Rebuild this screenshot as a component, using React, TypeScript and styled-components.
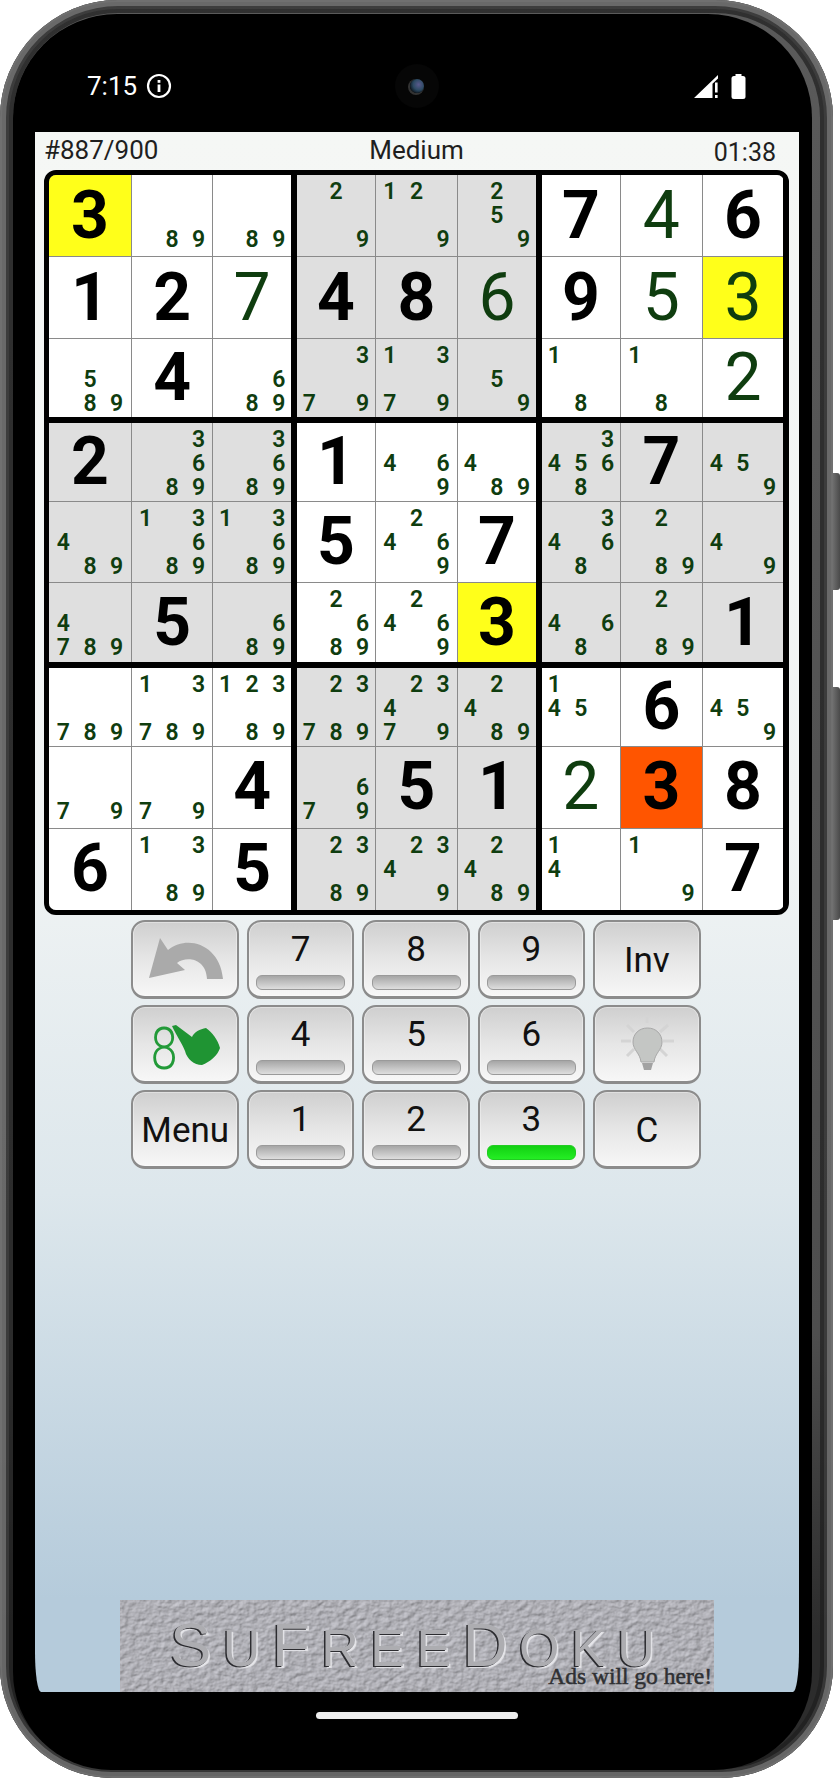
import React from 'react';
import styled, { createGlobalStyle } from 'styled-components';

const GlobalStyle = createGlobalStyle`
  html, body {
    margin: 0;
    padding: 0;
    background: #ffffff;
  }
  * {
    box-sizing: border-box;
  }
`;

const Page = styled.div`
  width: 840px;
  height: 1778px;
  background: #ffffff;
  overflow: hidden;
  font-family: Roboto, "Liberation Sans", sans-serif;
`;

const Shell = styled.div`
  position: relative;
  width: 833px;
  height: 1778px;
  padding: 14px 21px 8px 13px;
  border-radius: 118px 118px 112px 112px;
  background: linear-gradient(180deg, #5a5a5a 0%, #4e4e4e 75%, #2c2c2c 92%);
  box-shadow:
    inset 0 0 0 2px rgba(120, 120, 120, 0.5),
    inset 0 0 0 6px rgba(150, 150, 150, 0.5),
    inset 0 0 0 9px rgba(70, 70, 70, 0.6),
    inset 0 0 0 13px rgba(30, 30, 30, 0.7);
`;

const SideKey = styled.div<{ $top: number; $height: number }>`
  position: absolute;
  left: 833px;
  top: ${(p) => p.$top}px;
  width: 7px;
  height: ${(p) => p.$height}px;
  border-radius: 0 3px 3px 0;
  background: linear-gradient(90deg, #6d6d6d, #4a4a4a);
`;

const Bezel = styled.div`
  height: 100%;
  padding: 0 13px 0 22px;
  border-radius: 104px 104px 98px 98px;
  background: #000000;
  display: flex;
  flex-direction: column;
`;

const StatusBar = styled.div`
  position: relative;
  height: 118px;
  flex-shrink: 0;
  padding: 26px 53px 0 52px;
  display: flex;
  align-items: center;
  justify-content: space-between;
  color: #ffffff;
`;

const StatusGroup = styled.div<{ $gap: number }>`
  display: flex;
  align-items: center;
  gap: ${(p) => p.$gap}px;
`;

const Clock = styled.span`
  font-size: 26px;
  line-height: 1;
`;

const Camera = styled.div`
  position: absolute;
  left: 50%;
  top: 50px;
  width: 44px;
  height: 44px;
  margin-left: -22px;
  border-radius: 50%;
  background: #060606;
  display: flex;
  align-items: center;
  justify-content: center;
`;

const Lens = styled.div`
  width: 14px;
  height: 14px;
  border-radius: 50%;
  background: radial-gradient(circle at 62% 40%, #5a5a8c 0, #2c4a63 45%, #0a1016 80%);
  box-shadow: -1px 1px 0 1px #333333;
`;

const Screen = styled.div`
  height: 1560px;
  flex-shrink: 0;
  border-radius: 0 0 6px 6px / 0 0 40px 40px;
  background: linear-gradient(180deg, #f5f7f5 0%, #f1f4f4 45%, #dde7ec 68%, #b5cbdb 94%);
  display: flex;
  flex-direction: column;
  overflow: hidden;
`;

const GameHeader = styled.div`
  height: 38px;
  flex-shrink: 0;
  padding: 0 23px 2px 9px;
  display: grid;
  grid-template-columns: 1fr auto 1fr;
  align-items: center;
  font-size: 26px;
  line-height: 1;
  color: #1f1f1f;
`;

const HeaderCenter = styled.span`
  padding-left: 13px;
`;

const HeaderRight = styled.span`
  text-align: right;
  font-size: 25px;
  padding-top: 4px;
`;

const Board = styled.div`
  width: 745px;
  margin-left: 9px;
  flex-shrink: 0;
  border: 5.5px solid #000000;
  border-bottom-width: 5px;
  border-radius: 12px;
  background: #000000;
  overflow: hidden;
  display: grid;
  grid-template-columns: 242.2px 239.4px 241.3px;
  grid-template-rows: 242px 239.5px 242.5px;
  gap: 5.6px;
`;

const Box = styled.div<{ $cols: string; $rows: string }>`
  display: grid;
  grid-template-columns: ${(p) => p.$cols};
  grid-template-rows: ${(p) => p.$rows};
  gap: 1px;
  background: #8a8a8a;
`;

const Cell = styled.div<{ $bg: string }>`
  background: ${(p) => p.$bg};
  display: flex;
  align-items: center;
  justify-content: center;
  overflow: hidden;
`;

const BigDigit = styled.span<{ $given: boolean }>`
  font-size: 66px;
  line-height: 1;
  font-weight: ${(p) => (p.$given ? 700 : 400)};
  color: ${(p) => (p.$given ? '#000000' : '#0f3d0f')};
`;

const PencilGrid = styled.div`
  width: 100%;
  height: 100%;
  padding: 5px 0 3px;
  display: grid;
  grid-template-columns: repeat(3, 26.6px);
  grid-template-rows: repeat(3, 24px);
  justify-content: center;
`;

const PencilDigit = styled.span`
  font-size: 23px;
  line-height: 24px;
  font-weight: 600;
  text-align: center;
  color: #0f3d0f;
`;

const Keypad = styled.div`
  margin-top: 5px;
  padding-right: 2px;
  flex-shrink: 0;
  display: grid;
  grid-template-columns: repeat(5, 107.6px);
  grid-template-rows: repeat(3, 79px);
  column-gap: 7.8px;
  row-gap: 6px;
  justify-content: center;
`;

const Key = styled.button`
  padding: 3px 0 0;
  border: 2px solid #8c8c8c;
  border-bottom-width: 3px;
  border-radius: 14px;
  background: linear-gradient(180deg, #cfcfcf 0%, #e6e6e6 50%, #f7f7f7 100%);
  box-shadow: inset 0 0 0 1px rgba(255, 255, 255, 0.35);
  font-family: Roboto, "Liberation Sans", sans-serif;
  font-size: 35px;
  line-height: 1;
  color: #111111;
  display: flex;
  align-items: center;
  justify-content: center;
`;

const IconKey = styled(Key)`
  padding: 0;
`;

const DigitKey = styled(Key)`
  padding-top: 10px;
  flex-direction: column;
  justify-content: flex-start;
  gap: 8px;
`;

const CountBar = styled.div<{ $active?: boolean }>`
  width: 89px;
  height: 15px;
  border-radius: 6px;
  border: 1px solid ${(p) => (p.$active ? '#22cc22' : '#9a9a9a')};
  background: ${(p) =>
    p.$active
      ? 'linear-gradient(180deg, #12d012, #24ee24)'
      : 'linear-gradient(180deg, #a6a6a6, #dedede)'};
`;

const KeyIcon = styled.svg`
  overflow: visible;
`;

const AdBanner = styled.div`
  position: relative;
  width: 594px;
  height: 92px;
  margin: auto auto 0;
  flex-shrink: 0;
  background: #a8a8ad;
  overflow: hidden;
`;

const StoneTexture = styled.svg`
  position: absolute;
  left: 0;
  top: 0;
  width: 100%;
  height: 100%;
`;

const AdContent = styled.div`
  position: relative;
  height: 100%;
  padding: 25px 2px 0 50px;
  display: flex;
  flex-direction: column;
`;

const Logo = styled.div`
  display: flex;
  align-items: baseline;
  height: 40px;
  gap: 11.5px;
  line-height: 40px;
  font-family: "Liberation Sans", Arial, sans-serif;
  color: #adadb1;
  text-shadow:
    -1.5px 1px 0 #2c2c30,
    1.5px 2px 1px #e6e6ea;
`;

const LogoLetter = styled.span<{ $big?: boolean }>`
  font-size: ${(p) => (p.$big ? 62 : 52)}px;
  text-transform: uppercase;
`;

const AdNote = styled.div`
  align-self: flex-end;
  font-family: "Liberation Serif", "Times New Roman", serif;
  font-size: 23.5px;
  line-height: 22px;
  color: #2f3033;
  -webkit-text-stroke: 0.5px #2f3033;
`;

const HomeArea = styled.div`
  flex: 1;
  display: flex;
  justify-content: center;
  padding-top: 20px;
`;

const HomeBar = styled.div`
  width: 202px;
  height: 7px;
  border-radius: 4px;
  background: #eeeeee;
`;

const BOARD: string[][] = [
  ['G3y', '89', '89', '29', '129', '259', 'G7', 'P4', 'G6'],
  ['G1', 'G2', 'P7', 'G4', 'G8', 'P6', 'G9', 'P5', 'P3y'],
  ['589', 'G4', '689', '379', '1379', '59', '18', '18', 'P2'],
  ['G2', '3689', '3689', 'G1', '469', '489', '34568', 'G7', '459'],
  ['489', '13689', '13689', 'G5', '2469', 'G7', '3468', '289', '49'],
  ['4789', 'G5', '689', '2689', '2469', 'G3y', '468', '289', 'G1'],
  ['789', '13789', '12389', '23789', '23479', '2489', '145', 'G6', '459'],
  ['79', '79', 'G4', '679', 'G5', 'G1', 'P2', 'G3o', 'G8'],
  ['G6', '1389', 'G5', '2389', '2349', '2489', '14', '19', 'G7'],
];

const HIGHLIGHTS: Record<string, string> = { y: '#ffff1a', o: '#ff5500' };

// the board in the shot is not quite even, track sizes per box column / row
const BOX_COLS = ['82fr 80fr 78fr', '78.5fr 80.5fr 78.5fr', '78fr 80.5fr 80fr'];
const BOX_ROWS = ['81fr 81fr 78fr', '78fr 80.5fr 79fr', '78fr 81fr 81.5fr'];

const cellAt = (box: number, index: number): string => {
  const row = 3 * Math.floor(box / 3) + Math.floor(index / 3);
  const col = 3 * (box % 3) + (index % 3);
  return BOARD[row][col];
};

const SudokuCell = ({ token, shaded }: { token: string; shaded: boolean }): React.ReactElement => {
  const isBig = token[0] === 'G' || token[0] === 'P';
  const highlight = HIGHLIGHTS[token[2]];
  const bg = highlight || (shaded ? '#dfdfdf' : '#ffffff');

  if (isBig) {
    return (
      <Cell $bg={bg}>
        <BigDigit $given={token[0] === 'G'}>{token[1]}</BigDigit>
      </Cell>
    );
  }
  return (
    <Cell $bg={bg}>
      <PencilGrid>
        {[1, 2, 3, 4, 5, 6, 7, 8, 9].map((n) => (
          <PencilDigit key={n}>{token.includes(String(n)) ? n : ''}</PencilDigit>
        ))}
      </PencilGrid>
    </Cell>
  );
};

const InfoIcon = () => (
  <svg width="26" height="26" viewBox="0 0 26 26">
    <circle cx="13" cy="13" r="11" fill="none" stroke="#ffffff" strokeWidth="2.2" />
    <rect x="11.6" y="11.5" width="2.8" height="7.5" fill="#ffffff" />
    <rect x="11.6" y="7" width="2.8" height="2.8" fill="#ffffff" />
  </svg>
);

const SignalIcon = () => (
  <svg width="24" height="23" viewBox="0 0 24 23">
    <path d="M0 23 L24 0 L24 3.5 L18.5 8.8 L18.5 23 Z" fill="#ffffff" />
    <rect x="21" y="7.5" width="2.6" height="10" fill="#ffffff" />
    <rect x="21" y="20" width="2.6" height="3" fill="#ffffff" />
  </svg>
);

const BatteryIcon = () => (
  <svg width="15" height="25" viewBox="0 0 15 25">
    <rect x="4.5" y="0" width="6" height="3" fill="#ffffff" />
    <rect x="0.5" y="2" width="14" height="23" rx="2.5" fill="#ffffff" />
  </svg>
);

const UndoIcon = () => (
  <KeyIcon width="103" height="74" viewBox="2 2 103 74">
    <path
      d="M28 18 L17 58 L53 50 L45 43 C54 36 74 38 75 59 L91 59 C88 25 56 14 36 30 Z"
      fill="#aaaaaa"
    />
  </KeyIcon>
);

const FingerIcon = () => (
  <KeyIcon width="103" height="74" viewBox="2 2 103 74">
    <text
      transform="translate(32 64) scale(0.8 1)"
      textAnchor="middle"
      fontFamily="Roboto, sans-serif"
      fontSize="60"
      fontWeight="300"
      fill="#229a38"
    >
      8
    </text>
    <path
      d="M40 21 L44 20 L60 32 C62 27 68 24 74 23 C80 27 86 35 88 43 C86 50 78 57 70 60 C62 60 55 54 53 46 C50 38 44 30 40 21 Z"
      fill="#1f9433"
    />
  </KeyIcon>
);

const BulbIcon = () => (
  <KeyIcon width="103" height="74" viewBox="2 2 103 74">
    <g stroke="#d4d4d4" strokeWidth="3">
      <line x1="54" y1="12" x2="54" y2="18" />
      <line x1="28" y1="36" x2="38" y2="36" />
      <line x1="70" y1="36" x2="81" y2="36" />
      <line x1="34" y1="20" x2="41" y2="27" />
      <line x1="75" y1="20" x2="67" y2="27" />
      <line x1="34" y1="51" x2="41" y2="44" />
      <line x1="74" y1="51" x2="67" y2="44" />
    </g>
    <path
      d="M54.5 23 C46 23 40 29 40 37 C40 45 47 48 48 57 L61 57 C62 48 69 45 69 37 C69 29 63 23 54.5 23 Z"
      fill="#c4c6c4"
      stroke="#a8a8a8"
      strokeWidth="1"
    />
    <path d="M49 58 L60 58 L58 65 L51 65 Z" fill="#a2a2a2" />
  </KeyIcon>
);

const Keys = () => (
  <Keypad>
    <IconKey aria-label="Undo"><UndoIcon /></IconKey>
    {[7, 8, 9].map((n) => (
      <DigitKey key={n}>{n}<CountBar /></DigitKey>
    ))}
    <Key>Inv</Key>
    <IconKey aria-label="Pencil mode"><FingerIcon /></IconKey>
    {[4, 5, 6].map((n) => (
      <DigitKey key={n}>{n}<CountBar /></DigitKey>
    ))}
    <IconKey aria-label="Hint"><BulbIcon /></IconKey>
    <Key>Menu</Key>
    {[1, 2, 3].map((n) => (
      <DigitKey key={n}>{n}<CountBar $active={n === 3} /></DigitKey>
    ))}
    <Key>C</Key>
  </Keypad>
);

const Ad = () => (
  <AdBanner>
    <StoneTexture>
      <filter id="stone" x="0" y="0" width="100%" height="100%" colorInterpolationFilters="sRGB">
        <feTurbulence type="fractalNoise" baseFrequency="0.14 0.2" numOctaves="4" seed="7" />
        <feDiffuseLighting surfaceScale="0.9" lightingColor="#ffffff" diffuseConstant="0.95">
          <feDistantLight azimuth="225" elevation="58" />
        </feDiffuseLighting>
        <feColorMatrix
          type="matrix"
          values="0.85 0 0 0 0  0 0.85 0 0 0  0 0 0.88 0 0  0 0 0 1 0"
        />
      </filter>
      <rect width="100%" height="100%" filter="url(#stone)" />
    </StoneTexture>
    <AdContent>
      <Logo>
        <LogoLetter $big>S</LogoLetter>
        <LogoLetter>u</LogoLetter>
        <LogoLetter $big>F</LogoLetter>
        <LogoLetter>r</LogoLetter>
        <LogoLetter>e</LogoLetter>
        <LogoLetter>e</LogoLetter>
        <LogoLetter $big>D</LogoLetter>
        <LogoLetter>o</LogoLetter>
        <LogoLetter>k</LogoLetter>
        <LogoLetter>u</LogoLetter>
      </Logo>
      <AdNote>Ads will go here!</AdNote>
    </AdContent>
  </AdBanner>
);

export default function App(): React.ReactElement {
  return (
    <Page>
      <GlobalStyle />
      <Shell>
        <SideKey $top={473} $height={117} />
        <SideKey $top={687} $height={233} />
        <Bezel>
          <StatusBar>
            <StatusGroup $gap={9}>
              <Clock>7:15</Clock>
              <InfoIcon />
            </StatusGroup>
            <Camera><Lens /></Camera>
            <StatusGroup $gap={13}>
              <SignalIcon />
              <BatteryIcon />
            </StatusGroup>
          </StatusBar>
          <Screen>
            <GameHeader>
              <span>#887/900</span>
              <HeaderCenter>Medium</HeaderCenter>
              <HeaderRight>01:38</HeaderRight>
            </GameHeader>
            <Board>
              {[0, 1, 2, 3, 4, 5, 6, 7, 8].map((box) => (
                <Box key={box} $cols={BOX_COLS[box % 3]} $rows={BOX_ROWS[Math.floor(box / 3)]}>
                  {[0, 1, 2, 3, 4, 5, 6, 7, 8].map((i) => (
                    <SudokuCell key={i} token={cellAt(box, i)} shaded={box % 2 === 1} />
                  ))}
                </Box>
              ))}
            </Board>
            <Keys />
            <Ad />
          </Screen>
          <HomeArea><HomeBar /></HomeArea>
        </Bezel>
      </Shell>
    </Page>
  );
}
